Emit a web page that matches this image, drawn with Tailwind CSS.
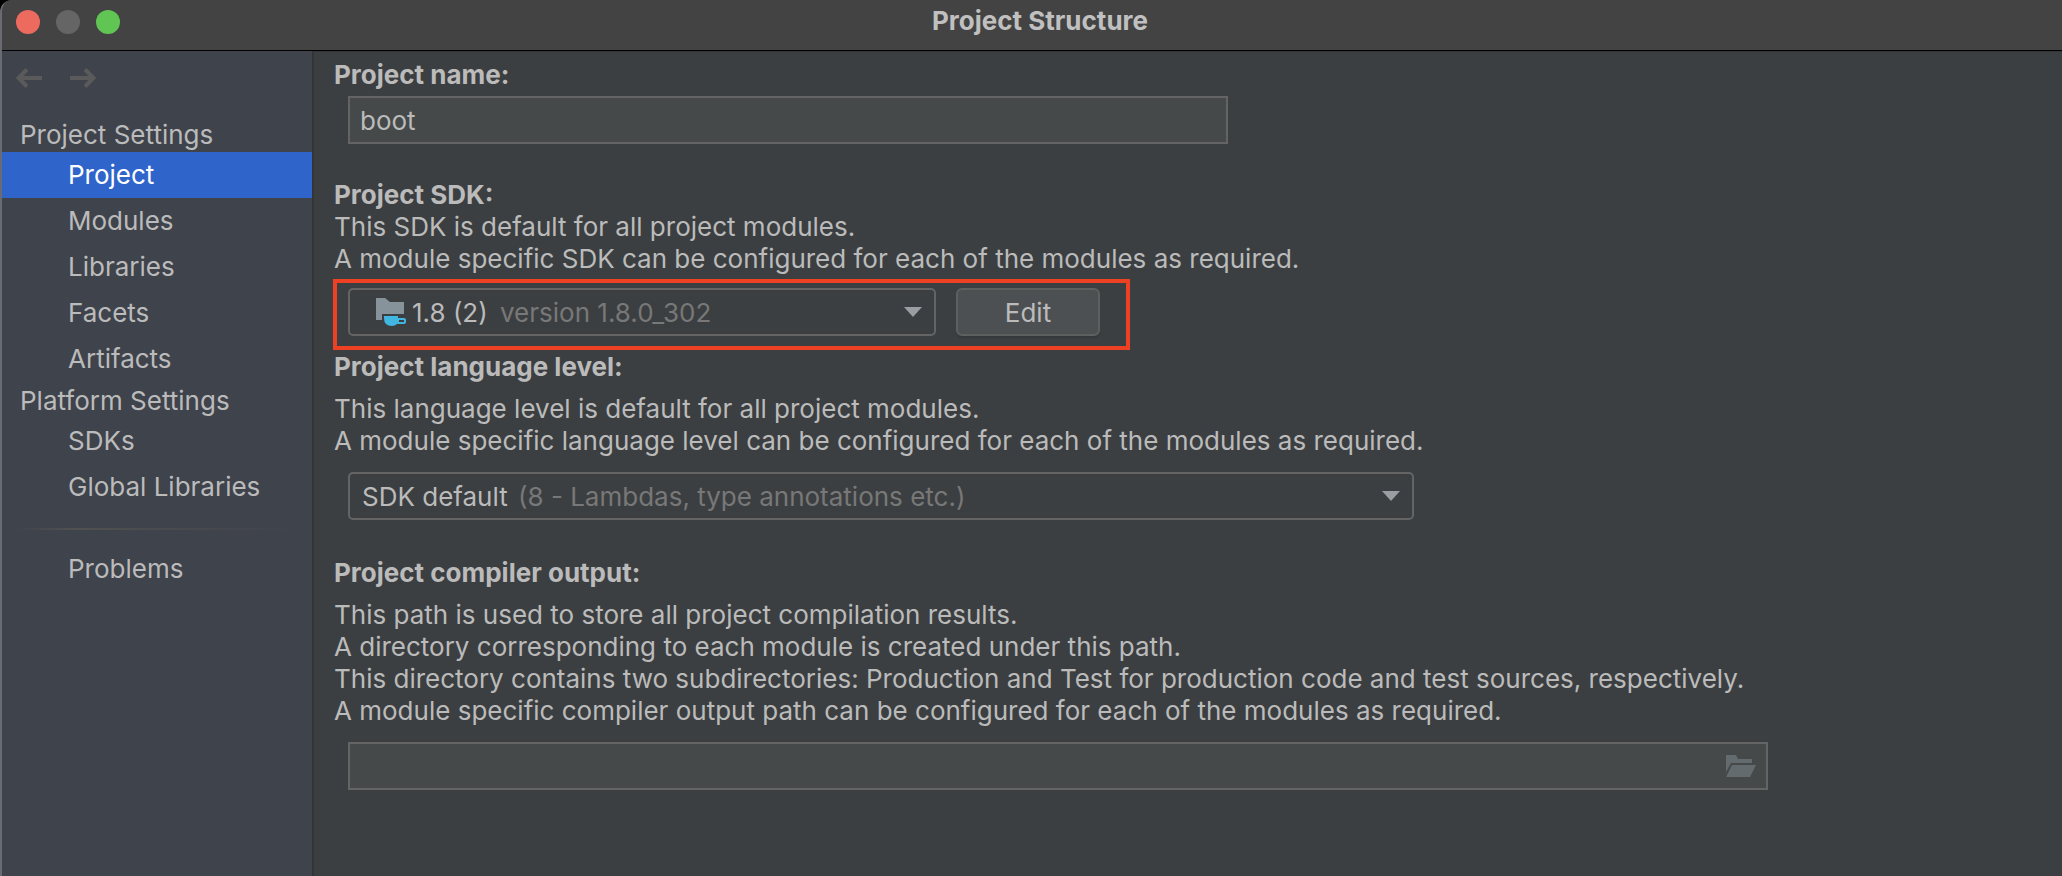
<!DOCTYPE html>
<html lang="en">

<head>
    <meta charset="UTF-8">
    <meta name="viewport" content="width=device-width, initial-scale=1.0">
    <title>Project Structure</title>
    <script src="https://cdn.jsdelivr.net/npm/@tailwindcss/browser@4"></script>
</head>

<body class="bg-black font-['Inter','Liberation_Sans',sans-serif] text-[26px] leading-[32px] text-[#bbbbbb]">
    <div class="flex min-h-screen flex-col overflow-hidden rounded-tl-[12px] border-l-2 border-[#686b70] bg-[#3c3f41]">
        <!-- title bar -->
        <header class="grid h-[51px] grid-cols-[1fr_auto_1fr] border-b border-black bg-[#434343] pl-4">
            <div class="-ml-[2px] flex gap-4 pt-[10px]">
                <button aria-label="Close" class="size-6 rounded-full bg-[#ed6a5e]"></button>
                <button aria-label="Minimize" class="size-6 rounded-full bg-[#656565]"></button>
                <button aria-label="Zoom" class="size-6 rounded-full bg-[#61c554]"></button>
            </div>
            <h1 class="pt-[5px] font-bold text-[#c0c0c0]">Project Structure</h1>
        </header>

        <div class="flex flex-1">
            <!-- sidebar -->
            <nav class="w-[312px] shrink-0 border-r-2 border-[#323435] bg-[#3f434c]">
                <div class="flex h-[65px] gap-7 pt-[17px] pl-[14px]">
                    <button aria-label="Back" class="h-5 w-[26px]">
                        <svg width="26" height="20" viewBox="0 0 26 20" fill="none" stroke="#5a5a5a" stroke-width="4"><path d="M26 10H3M11 1.5L2.5 10L11 18.5"/></svg>
                    </button>
                    <button aria-label="Forward" class="h-5 w-[26px]">
                        <svg width="26" height="20" viewBox="0 0 26 20" fill="none" stroke="#5a5a5a" stroke-width="4"><path d="M0 10H23M15 1.5L23.5 10L15 18.5"/></svg>
                    </button>
                </div>
                <h2 class="pt-[2px] pl-[18px] leading-[34px]">Project Settings</h2>
                <ul class="leading-[46px]">
                    <li><a href="#" class="block bg-[#2f65ca] pl-[66px] text-white">Project</a></li>
                    <li><a href="#" class="block pl-[66px]">Modules</a></li>
                    <li><a href="#" class="block pl-[66px]">Libraries</a></li>
                    <li><a href="#" class="block pl-[66px]">Facets</a></li>
                    <li><a href="#" class="block pl-[66px]">Artifacts</a></li>
                </ul>
                <h2 class="pt-[2px] pl-[18px] leading-[34px]">Platform Settings</h2>
                <ul class="leading-[46px]">
                    <li><a href="#" class="block pl-[66px]">SDKs</a></li>
                    <li><a href="#" class="block pl-[66px]">Global Libraries</a></li>
                </ul>
                <div class="mx-[14px] mt-[18px] mb-4 h-[2px] bg-linear-to-r from-transparent via-[#515151] via-20% to-transparent"></div>
                <a href="#" class="block pl-[66px] leading-[46px]">Problems</a>
            </nav>

            <!-- settings -->
            <main class="min-w-0 flex-1 border-t border-[#333638] px-5 pt-[7px]">
                <section>
                    <label for="name" class="block font-bold">Project name:</label>
                    <div class="mt-[5px] pl-[14px]">
                        <input id="name" type="text" value="boot" class="block h-12 w-full max-w-[880px] border-2 border-[#646464] bg-[#45494a] px-[10px]">
                    </div>
                </section>

                <section class="mt-[35px]">
                    <label for="sdk" class="block font-bold">Project SDK:</label>
                    <p>This SDK is default for all project modules.</p>
                    <p>A module specific SDK can be configured for each of the modules as required.</p>
                    <!-- highlighted SDK row -->
                    <div class="mt-1 -ml-px flex w-full max-w-[797px] gap-5 border-4 border-[#ee4023] pt-[5px] pr-[26px] pb-[10px] pl-[11px]">
                        <div class="grid flex-1 items-center *:col-start-1 *:row-start-1">
                            <select id="sdk" class="h-12 w-full appearance-none rounded-[5px] border-2 border-[#646464] pt-[2px] pl-[62px]">
                                <option>1.8 (2)</option>
                            </select>
                            <div class="pointer-events-none flex items-center pr-[14px] pl-[28px]">
                                <svg width="30" height="28" viewBox="0 0 30 28">
                                    <path fill="#87939a" d="M0 0H9L14 4H28V16H6V22H0Z"/>
                                    <path fill="#40b6e0" fill-rule="evenodd" d="M8 18H22V20H28Q30 20 30 22V24Q30 26 28 26H21Q19 28 16 28Q8 28 8 20ZM23 22V24H28V22Z"/>
                                </svg>
                                <span class="ml-[94px] flex-1 pt-[2px] text-[#787878]">version 1.8.0_302</span>
                                <svg width="18" height="10" viewBox="0 0 18 10"><path fill="#9a9da1" d="M0 0H18L9 10Z"/></svg>
                            </div>
                        </div>
                        <button class="h-12 w-[144px] rounded-md border-2 border-[#5e6060] bg-[#4c5052] pt-[2px] shadow-[0_2px_0_#36393a]">Edit</button>
                    </div>
                </section>

                <section class="mt-px">
                    <label for="level" class="block font-bold">Project language level:</label>
                    <p class="mt-[10px]">This language level is default for all project modules.</p>
                    <p>A module specific language level can be configured for each of the modules as required.</p>
                    <div class="mt-[15px] ml-[14px] grid max-w-[1066px] items-center *:col-start-1 *:row-start-1">
                        <select id="level" class="h-12 w-full appearance-none rounded-[5px] border-2 border-[#646464] pt-[2px] pl-3">
                            <option>SDK default</option>
                        </select>
                        <div class="pointer-events-none flex items-center pr-[14px] pl-[170px]">
                            <span class="flex-1 pt-[2px] text-[#787878]">(8 - Lambdas, type annotations etc.)</span>
                            <svg width="18" height="10" viewBox="0 0 18 10"><path fill="#9a9da1" d="M0 0H18L9 10Z"/></svg>
                        </div>
                    </div>
                </section>

                <section class="mt-[37px]">
                    <label for="output" class="block font-bold">Project compiler output:</label>
                    <p class="mt-[10px]">This path is used to store all project compilation results.</p>
                    <p>A directory corresponding to each module is created under this path.</p>
                    <p>This directory contains two subdirectories: Production and Test for production code and test sources, respectively.</p>
                    <p>A module specific compiler output path can be configured for each of the modules as required.</p>
                    <div class="mt-[15px] ml-[14px] flex h-12 max-w-[1420px] items-center border-2 border-[#646464] bg-[#45494a] pr-[10px]">
                        <input id="output" type="text" class="h-full min-w-0 flex-1 px-[10px]">
                        <button aria-label="Browse" class="h-[22px] w-[30px]">
                            <svg width="30" height="22" viewBox="0 0 30 22" fill="#636b6f"><path d="M0 0H10L12 4H26V8H5L0 17ZM6 10H30L24 22H0Z"/></svg>
                        </button>
                    </div>
                </section>
            </main>
        </div>
    </div>
</body>

</html>
